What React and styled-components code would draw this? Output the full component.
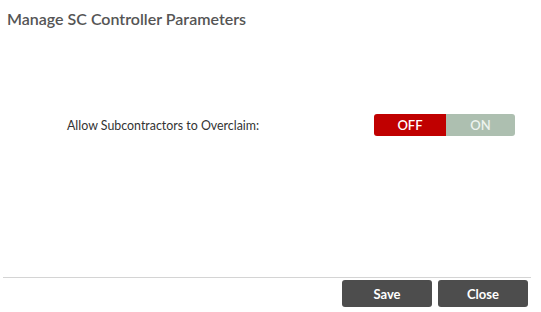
import React, { useState } from "react";
import styled, { createGlobalStyle } from "styled-components";

const GlobalStyle = createGlobalStyle`
  html, body {
    margin: 0;
    padding: 0;
    background: #ffffff;
  }
  body {
    font-family: Lato, "Open Sans", "Liberation Sans", sans-serif;
  }
`;

const App = () => {
  const [overclaim, setOverclaim] = useState(false);

  return (
    <Dialog>
      <GlobalStyle />
      <Header>
        <Title>Manage SC Controller Parameters</Title>
      </Header>

      <Body>
        <Row>
          <Label>Allow Subcontractors to Overclaim:</Label>
          <Toggle>
            <ToggleOption
              $active={!overclaim}
              $tone="off"
              onClick={() => setOverclaim(false)}
            >
              OFF
            </ToggleOption>
            <ToggleOption
              $active={overclaim}
              $tone="on"
              onClick={() => setOverclaim(true)}
            >
              ON
            </ToggleOption>
          </Toggle>
        </Row>
      </Body>

      <Footer>
        <Button>Save</Button>
        <Button>Close</Button>
      </Footer>
    </Dialog>
  );
};

export default App;

const Dialog = styled.div`
  width: 541px;
  height: 312px;
  display: flex;
  flex-direction: column;
  background: #ffffff;
  box-sizing: border-box;
`;

const Header = styled.div`
  height: 36px;
  padding: 0 7px;
  display: flex;
  align-items: center;
`;

const Title = styled.h1`
  margin: 0;
  font-size: 16px;
  font-weight: 600;
  color: #555555;
`;

const Body = styled.div`
  flex: 1;
  padding-top: 78px;
  box-sizing: border-box;
`;

const Row = styled.div`
  display: grid;
  grid-template-columns: 374px auto;
  align-items: center;
`;

const Label = styled.span`
  padding-left: 67px;
  font-size: 12.4px;
  color: #333333;
`;

const Toggle = styled.div`
  display: flex;
  height: 22px;
`;

const ToggleOption = styled.button`
  border: 0;
  outline: none;
  margin: 0;
  padding: 0;
  width: ${(p) => (p.$tone === "off" ? "72px" : "69px")};
  height: 22px;
  font-family: inherit;
  font-size: 13px;
  font-weight: 600;
  cursor: pointer;
  border-radius: ${(p) => (p.$tone === "off" ? "3px 0 0 3px" : "0 3px 3px 0")};
  background-color: ${(p) =>
    p.$active ? (p.$tone === "off" ? "#c00000" : "#2f8f46") : "#adbfb0"};
  color: ${(p) => (p.$active ? "#ffffff" : "#eef3ef")};
`;

const Footer = styled.div`
  margin: 0 10px 5px 3px;
  padding-top: 2px;
  padding-right: 3px;
  border-top: 1px solid #d4d4d4;
  display: flex;
  justify-content: flex-end;
  gap: 6px;
`;

const Button = styled.button`
  border: 0;
  outline: none;
  width: 90px;
  height: 27px;
  border-radius: 3px;
  background-color: #4d4d4d;
  color: #ffffff;
  font-family: inherit;
  font-size: 13px;
  font-weight: 700;
  cursor: pointer;
`;
